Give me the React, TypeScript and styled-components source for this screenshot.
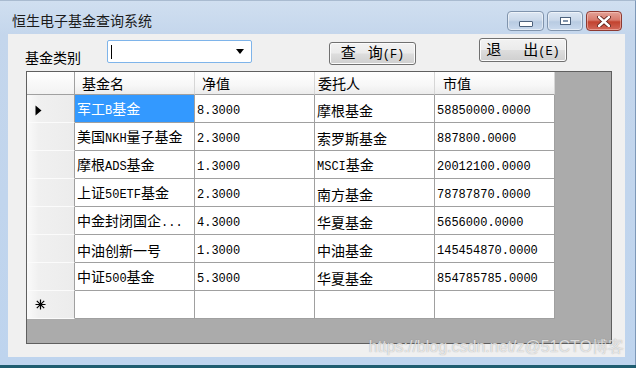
import React from "react";
import styled, { createGlobalStyle } from "styled-components";

const GlobalStyle = createGlobalStyle`
  html, body {
    margin: 0;
    padding: 0;
    background: #1f5d70;
  }
  body {
    width: 636px;
    height: 368px;
    overflow: hidden;
    font-family: "Noto Sans CJK SC", sans-serif;
  }
`;

const Window = styled.div`
  position: relative;
  width: 636px;
  height: 365px;
  box-sizing: border-box;
  padding: 0 10px 8px 8px;
  display: flex;
  flex-direction: column;
  background: linear-gradient(#d0dff0 0px, #c4d6ec 34px, #bed4ee 100%);
  border-right: 1px solid #7d98b8;
  border-top: 1px solid #a9bbd0;
`;

const TitleBar = styled.div`
  height: 33px;
  display: flex;
  align-items: flex-start;
`;

const Title = styled.div`
  margin: 9px 0 0 4px;
  font-size: 14px;
  line-height: 20px;
  color: #1b1b1b;
`;

const Caption = styled.div`
  margin: 10px 3px 0 auto;
  display: flex;
  gap: 3px;
`;

const CaptionButton = styled.div<{ $close?: boolean; $w: number }>`
  width: ${(p) => p.$w}px;
  height: 20px;
  box-sizing: border-box;
  border-radius: 4px;
  display: flex;
  align-items: center;
  justify-content: center;
  border: 1px solid ${(p) => (p.$close ? "#8d3a32" : "#8094ad")};
  box-shadow: inset 0 0 0 1px ${(p) => (p.$close ? "rgba(255,210,200,0.5)" : "rgba(255,255,255,0.5)")};
  background: ${(p) =>
    p.$close
      ? "linear-gradient(#e3a297 0%, #d87a6c 45%, #c2432f 55%, #d2685a 100%)"
      : "linear-gradient(#dde7f3 0%, #cbd9ea 45%, #b8cbe2 55%, #c9d9ed 100%)"};
`;

const MinGlyph = styled.div`
  width: 12px;
  height: 4px;
  margin-top: 5px;
  background: #fff;
  border: 1px solid #4d627d;
  border-radius: 1px;
`;

const MaxGlyph = styled.div`
  width: 9px;
  height: 6px;
  background: #fff;
  border: 1px solid #4d627d;
  box-shadow: inset 0 0 0 2px #fff, inset 0 0 0 3px #8294ab;
`;

const Client = styled.div`
  flex: 1;
  background: #f0f0f0;
  display: flex;
  flex-direction: column;
  position: relative;
`;

const Toolbar = styled.div`
  height: 37px;
  display: flex;
  align-items: flex-start;
  padding-left: 17px;
`;

const Label = styled.div`
  width: 57px;
  margin-top: 14px;
  font-size: 14px;
  line-height: 19px;
  color: #000;
`;

const Combo = styled.div`
  margin: 6px 0 0 25px;
  width: 145px;
  height: 23px;
  box-sizing: border-box;
  background: #fff;
  border: 1px solid #7eb4ea;
  border-radius: 2px;
  display: flex;
  align-items: center;
  padding: 0 7px 0 3px;
`;

const Caret = styled.div`
  width: 1px;
  height: 14px;
  background: #000;
`;

const DropArrow = styled.div`
  margin-left: auto;
  width: 0;
  height: 0;
  border-left: 4px solid transparent;
  border-right: 4px solid transparent;
  border-top: 5px solid #000;
`;

const Button = styled.div<{ $w: number; $h: number; $top: number; $left: number }>`
  margin: ${(p) => p.$top}px 0 0 ${(p) => p.$left}px;
  width: ${(p) => p.$w}px;
  height: ${(p) => p.$h}px;
  box-sizing: border-box;
  border: 1px solid #707070;
  border-radius: 3px;
  box-shadow: inset 0 0 0 1px #fbfbfb;
  background: linear-gradient(#f2f2f2 0%, #ebebeb 48%, #dddddd 52%, #cfcfcf 100%);
  display: flex;
  align-items: center;
  justify-content: center;
  color: #000;
`;

const ButtonText = styled.span`
  font-size: 15px;
  line-height: 20px;
  white-space: pre;
`;

const Gap = styled.span<{ $w: number }>`
  display: inline-block;
  width: ${(p) => p.$w}px;
`;

const Latin = styled.span`
  font-family: "Liberation Mono", monospace;
  font-size: 12px;
  white-space: pre;
`;

const Grid = styled.div`
  margin-left: 18px;
  width: 586px;
  height: 273px;
  box-sizing: border-box;
  border: 1px solid #5f5f5f;
  background: #ababab;
  display: flex;
  flex-direction: column;
  font-size: 14px;
  color: #000;
`;

const Row = styled.div<{ $h: number }>`
  display: flex;
  height: ${(p) => p.$h}px;
  flex: none;
`;

const Corner = styled.div`
  width: 48px;
  box-sizing: border-box;
  border-right: 1px solid #a0a0a0;
  border-bottom: 1px solid #a0a0a0;
  background: linear-gradient(#ffffff, #f2f2f2);
`;

const HeaderCell = styled.div<{ $pad: number }>`
  width: 120px;
  box-sizing: border-box;
  display: flex;
  align-items: center;
  padding-left: ${(p) => p.$pad}px;
  border-right: 1px solid #d6d6d6;
  border-bottom: 1px solid #a0a0a0;
  background: linear-gradient(#ffffff 0%, #f7f7f7 60%, #ececec 100%);
`;

const RowHeader = styled.div`
  width: 48px;
  box-sizing: border-box;
  display: flex;
  align-items: center;
  padding-left: 8px;
  border-right: 1px solid #a0a0a0;
  border-bottom: 1px solid #fbfbfb;
  background: linear-gradient(to right, #fafafa 0%, #f0f0f0 25%, #ececec 100%);
`;

const Cell = styled.div<{ $selected?: boolean }>`
  width: 120px;
  box-sizing: border-box;
  display: flex;
  align-items: center;
  padding-left: 2px;
  overflow: hidden;
  border-right: 1px solid #a0a0a0;
  border-bottom: 1px solid #a0a0a0;
  background: ${(p) => (p.$selected ? "#3399ff" : "#ffffff")};
  color: ${(p) => (p.$selected ? "#ffffff" : "#000000")};
`;

const CellText = styled.span`
  line-height: 20px;
  margin-top: 2px;
  white-space: pre;
`;

const Watermark = styled.div`
  position: absolute;
  right: 1px;
  bottom: 2px;
  font-family: "Liberation Sans", sans-serif;
  font-size: 16px;
  line-height: 17px;
  color: rgba(255, 255, 255, 0.7);
  text-shadow: 0 0 1px rgba(120, 120, 120, 0.7);
  white-space: nowrap;
`;

const Mixed = ({ text }: { text: string }) => (
  <CellText>
    {text
      .split(/([\x20-\x7e]+)/)
      .filter(Boolean)
      .map((part, i) =>
        /^[\x20-\x7e]+$/.test(part) ? (
          <Latin key={i}>{part}</Latin>
        ) : (
          <React.Fragment key={i}>{part}</React.Fragment>
        )
      )}
  </CellText>
);

const funds = [
  { name: "军工B基金", nav: "8.3000", agent: "摩根基金", value: "58850000.0000" },
  { name: "美国NKH量子基金", nav: "2.3000", agent: "索罗斯基金", value: "887800.0000" },
  { name: "摩根ADS基金", nav: "1.3000", agent: "MSCI基金", value: "20012100.0000" },
  { name: "上证50ETF基金", nav: "2.3000", agent: "南方基金", value: "78787870.0000" },
  { name: "中金封闭国企...", nav: "4.3000", agent: "华夏基金", value: "5656000.0000" },
  { name: "中油创新一号", nav: "1.3000", agent: "中油基金", value: "145454870.0000" },
  { name: "中证500基金", nav: "5.3000", agent: "华夏基金", value: "854785785.0000" },
];

const columns = [
  { title: "基金名", pad: 7 },
  { title: "净值", pad: 7 },
  { title: "委托人", pad: 3 },
  { title: "市值", pad: 8 },
];

const CurrentMark = () => (
  <svg width="7" height="11" viewBox="0 0 7 11" style={{ marginTop: 3 }}>
    <path d="M0.5 0.5 L6.5 5.5 L0.5 10.5 Z" fill="#000" />
  </svg>
);

const NewRowMark = () => (
  <svg width="11" height="11" viewBox="0 0 11 11">
    <path
      d="M5.5 0.5 V10.5 M0.5 5.5 H10.5 M1.8 1.8 L9.2 9.2 M9.2 1.8 L1.8 9.2"
      stroke="#000"
      strokeWidth="1.2"
    />
    <circle cx="5.5" cy="5.5" r="1.6" fill="#000" />
  </svg>
);

const App = () => {
  return (
    <>
      <GlobalStyle />
      <Window>
        <TitleBar>
          <Title>恒生电子基金查询系统</Title>
          <Caption>
            <CaptionButton $w={37}>
              <MinGlyph />
            </CaptionButton>
            <CaptionButton $w={36}>
              <MaxGlyph />
            </CaptionButton>
            <CaptionButton $w={36} $close>
              <svg width="14" height="11" viewBox="0 0 14 11">
                <path
                  d="M2 1 L12 10 M12 1 L2 10"
                  stroke="#5a1d16"
                  strokeWidth="4.2"
                  strokeLinecap="round"
                />
                <path
                  d="M2 1 L12 10 M12 1 L2 10"
                  stroke="#ffffff"
                  strokeWidth="2.4"
                  strokeLinecap="round"
                />
              </svg>
            </CaptionButton>
          </Caption>
        </TitleBar>
        <Client>
          <Toolbar>
            <Label>基金类别</Label>
            <Combo>
              <Caret />
              <DropArrow />
            </Combo>
            <Button $w={87} $h={23} $top={8} $left={77}>
              <ButtonText>
                查<Gap $w={12} />询<Latin>(F)</Latin>
              </ButtonText>
            </Button>
            <Button $w={88} $h={24} $top={4} $left={63}>
              <ButtonText>
                退<Gap $w={22} />出<Latin>(E)</Latin>
              </ButtonText>
            </Button>
          </Toolbar>
          <Grid>
            <Row $h={23}>
              <Corner />
              {columns.map((c) => (
                <HeaderCell key={c.title} $pad={c.pad}>
                  {c.title}
                </HeaderCell>
              ))}
            </Row>
            {funds.map((f, i) => (
              <Row key={f.name} $h={28}>
                <RowHeader>{i === 0 && <CurrentMark />}</RowHeader>
                <Cell $selected={i === 0}>
                  <Mixed text={f.name} />
                </Cell>
                <Cell>
                  <Mixed text={f.nav} />
                </Cell>
                <Cell>
                  <Mixed text={f.agent} />
                </Cell>
                <Cell>
                  <Mixed text={f.value} />
                </Cell>
              </Row>
            ))}
            <Row $h={28}>
              <RowHeader>
                <NewRowMark />
              </RowHeader>
              <Cell />
              <Cell />
              <Cell />
              <Cell />
            </Row>
          </Grid>
          <Watermark>https://blog.csdn.net/z@51CTO博客</Watermark>
        </Client>
      </Window>
    </>
  );
};

export default App;
